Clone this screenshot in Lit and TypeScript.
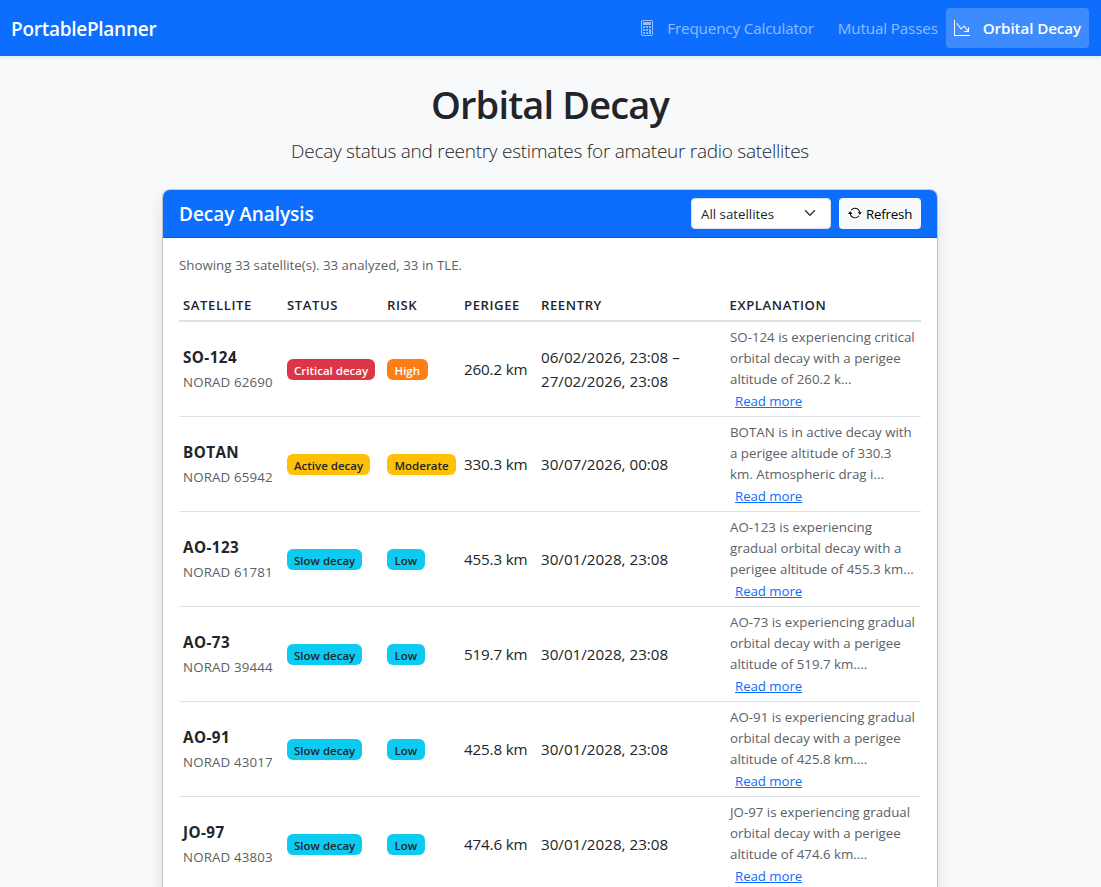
import { LitElement, html, css, svg } from "lit";
import { customElement } from "lit/decorators.js";

interface Sat {
  name: string;
  norad: string;
  status: string;
  statusKind: string;
  risk: string;
  riskKind: string;
  perigee: string;
  reentry: string[];
  text: string[];
}

const slow = (name: string, norad: string, perigee: string, text: string[]): Sat => ({
  name, norad, perigee, text,
  status: "Slow decay", statusKind: "info", risk: "Low", riskKind: "info",
  reentry: ["30/01/2028, 23:08"],
});

const SATS: Sat[] = [
  {
    name: "SO-124", norad: "62690", status: "Critical decay", statusKind: "danger",
    risk: "High", riskKind: "orange", perigee: "260.2 km",
    reentry: ["06/02/2026, 23:08 –", "27/02/2026, 23:08"],
    text: ["SO-124 is experiencing critical", "orbital decay with a perigee", "altitude of 260.2 k..."],
  },
  {
    name: "BOTAN", norad: "65942", status: "Active decay", statusKind: "warning",
    risk: "Moderate", riskKind: "warning", perigee: "330.3 km",
    reentry: ["30/07/2026, 00:08"],
    text: ["BOTAN is in active decay with", "a perigee altitude of 330.3", "km. Atmospheric drag i..."],
  },
  slow("AO-123", "61781", "455.3 km", ["AO-123 is experiencing", "gradual orbital decay with a", "perigee altitude of 455.3 km..."]),
  slow("AO-73", "39444", "519.7 km", ["AO-73 is experiencing gradual", "orbital decay with a perigee", "altitude of 519.7 km...."]),
  slow("AO-91", "43017", "425.8 km", ["AO-91 is experiencing gradual", "orbital decay with a perigee", "altitude of 425.8 km...."]),
  slow("JO-97", "43803", "474.6 km", ["JO-97 is experiencing gradual", "orbital decay with a perigee", "altitude of 474.6 km...."]),
];

const calculator = svg`
  <path d="M12 1a1 1 0 0 1 1 1v12a1 1 0 0 1-1 1H4a1 1 0 0 1-1-1V2a1 1 0 0 1 1-1zM4 0a2 2 0 0 0-2 2v12a2 2 0 0 0 2 2h8a2 2 0 0 0 2-2V2a2 2 0 0 0-2-2z"/>
  <path d="M4 2.5a.5.5 0 0 1 .5-.5h7a.5.5 0 0 1 .5.5v2a.5.5 0 0 1-.5.5h-7a.5.5 0 0 1-.5-.5zm0 4a.5.5 0 0 1 .5-.5h1a.5.5 0 0 1 .5.5v1a.5.5 0 0 1-.5.5h-1a.5.5 0 0 1-.5-.5zm0 3a.5.5 0 0 1 .5-.5h1a.5.5 0 0 1 .5.5v1a.5.5 0 0 1-.5.5h-1a.5.5 0 0 1-.5-.5zm0 3a.5.5 0 0 1 .5-.5h1a.5.5 0 0 1 .5.5v1a.5.5 0 0 1-.5.5h-1a.5.5 0 0 1-.5-.5zm3-6a.5.5 0 0 1 .5-.5h1a.5.5 0 0 1 .5.5v1a.5.5 0 0 1-.5.5h-1a.5.5 0 0 1-.5-.5zm0 3a.5.5 0 0 1 .5-.5h1a.5.5 0 0 1 .5.5v1a.5.5 0 0 1-.5.5h-1a.5.5 0 0 1-.5-.5zm0 3a.5.5 0 0 1 .5-.5h1a.5.5 0 0 1 .5.5v1a.5.5 0 0 1-.5.5h-1a.5.5 0 0 1-.5-.5zm3-6a.5.5 0 0 1 .5-.5h1a.5.5 0 0 1 .5.5v1a.5.5 0 0 1-.5.5h-1a.5.5 0 0 1-.5-.5zm0 3a.5.5 0 0 1 .5-.5h1a.5.5 0 0 1 .5.5v4a.5.5 0 0 1-.5.5h-1a.5.5 0 0 1-.5-.5z"/>`;
const graphDown = svg`
  <path fill-rule="evenodd" d="M0 0h1v15h15v1H0zm10 11.5a.5.5 0 0 0 .5.5h4a.5.5 0 0 0 .5-.5v-4a.5.5 0 0 0-1 0v2.6l-3.613-4.417a.5.5 0 0 0-.74-.037L7.06 8.233 3.404 3.206a.5.5 0 0 0-.808.588l4 5.5a.5.5 0 0 0 .758.06l2.609-2.61L13.445 11H10.5a.5.5 0 0 0-.5.5"/>`;
const repeat = svg`
  <path d="M11.534 7h3.932a.25.25 0 0 1 .192.41l-1.966 2.36a.25.25 0 0 1-.384 0l-1.966-2.36a.25.25 0 0 1 .192-.41m-11 2h3.932a.25.25 0 0 0 .192-.41L2.692 6.23a.25.25 0 0 0-.384 0L.342 8.59A.25.25 0 0 0 .534 9"/>
  <path fill-rule="evenodd" d="M8 3c-1.552 0-2.94.707-3.857 1.818a.5.5 0 1 1-.771-.636A6.002 6.002 0 0 1 13.917 7H12.9A5 5 0 0 0 8 3M3.1 9a5.002 5.002 0 0 0 8.757 2.182.5.5 0 1 1 .771.636A6.002 6.002 0 0 1 2.083 9z"/>`;

@customElement("app-root")
export class AppRoot extends LitElement {
  static styles = css`
    :host {
      display: block;
      height: 887px;
      overflow: hidden;
      background: #f8f9fa;
      color: #212529;
      font: 400 15.2px/24px "Open Sans", "Noto Sans", sans-serif;
    }
    * { box-sizing: border-box; }
    svg { display: block; fill: currentColor; flex: none; }
    .navbar {
      display: flex; align-items: center; justify-content: space-between;
      height: 56px; padding: 8px 12px 8px 11px;
      background: #0d6efd; color: #fff;
      box-shadow: 0 2px 4px rgba(0, 0, 0, .075);
    }
    .brand { padding-top: 2px; font-size: 19px; font-weight: 600; line-height: 30px; letter-spacing: -.27px; white-space: nowrap; }
    .links { display: flex; }
    .link {
      display: flex; align-items: center; height: 40px; padding: 0 8px; letter-spacing: -.14px;
      color: rgba(255, 255, 255, .55); border-radius: 4px; white-space: nowrap;
    }
    .link + .link { margin-left: 8px; }
    .link + .link.active { margin-left: 0; }
    .link svg { margin-right: 12px; }
    .active { color: #fff; background: rgba(255, 255, 255, .2); font-weight: 600; letter-spacing: -.1px; }
    .active svg { margin-right: 13px; }
    .head { width: 1100px; text-align: center; padding-top: 24px; height: 133px; }
    h1 { margin: 0; font-size: 38px; font-weight: 600; line-height: 48px; letter-spacing: -.85px; }
    .lead { margin: 8px 0 0; font-size: 19px; font-weight: 300; line-height: 30px; letter-spacing: -.27px; }
    .card {
      width: 776px; margin: 0 0 0 162px; height: 720px;
      background: #fff; border: 1px solid rgba(0, 0, 0, .176); border-radius: 8px;
      box-shadow: 0 8px 16px rgba(0, 0, 0, .1); background-clip: padding-box;
    }
    .card-head {
      display: flex; align-items: center; height: 48px; padding: 0 16px 1px; gap: 8px;
      background: #0d6efd; color: #fff; border-bottom: 1px solid rgba(0, 0, 0, .176);
      border-radius: 7px 7px 0 0;
    }
    h2 { margin: 0 auto 0 0; padding-top: 2px; font-size: 19px; font-weight: 600; line-height: 24px; letter-spacing: -.05px; }
    .select, .button {
      display: flex; align-items: center; height: 31px; border-radius: 4px;
      font-size: 13.3px; white-space: nowrap;
    }
    .select { width: 140px; padding: 1px 14px 0 9px; justify-content: space-between; background: #fff; color: #212529; border: 1px solid #dee2e6; }
    .select svg { margin-top: -2px; }
    .button { width: 82px; padding: 1px 0 0 9px; gap: 4px; background: #f8f9fa; color: #000; letter-spacing: -.2px; }
    .button svg { margin-top: -2px; }
    .body { padding: 17px 16px 0; }
    .summary { font-size: 13.3px; line-height: 21px; color: #5c6166; }
    table { width: 742px; margin-top: 14px; border-collapse: separate; border-spacing: 0; table-layout: fixed; }
    th, td { padding: 0 4px; text-align: left; vertical-align: middle; white-space: nowrap; }
    th {
      height: 32px; padding-top: 0; font-size: 13.1px; font-weight: 600; letter-spacing: .6px;
      border-bottom: 2px solid #dee2e6;
    }
    td { height: 95px; border-bottom: 1px solid #dee2e6; }
    .name { font-weight: 700; letter-spacing: .45px; }
    .norad { margin: 1px 0 -1px; font-size: 13.3px; letter-spacing: .15px; color: #5c6166; }
    .perigee { letter-spacing: -.15px; }
    .badge {
      display: block; width: fit-content; height: 21px; padding: 0 7px; border-radius: 6px;
      font-size: 11.5px; font-weight: 600; line-height: 23px;
    }
    .risk { padding: 0 7.5px; }
    .danger { background: #dc3545; color: #fff; }
    .orange { background: #fd7e14; color: #fff; }
    .warning { background: #ffc107; color: #212529; }
    .info { background: #0dcaf0; color: #212529; }
    .text { font-size: 13.3px; line-height: 21px; color: #5c6166; }
    .more { display: block; margin-left: 5px; font-size: 13.3px; line-height: 22px; letter-spacing: -.07px; color: #0d6efd; text-decoration: underline; }
    .text, .more { transform: translateX(.5px); }
  `;

  row(s: Sat) {
    return html`<tr>
      <td><div class="name">${s.name}</div><div class="norad">NORAD ${s.norad}</div></td>
      <td><span class="badge ${s.statusKind}">${s.status}</span></td>
      <td><span class="badge risk ${s.riskKind}">${s.risk}</span></td>
      <td class="perigee">${s.perigee}</td>
      <td>${s.reentry.map((l) => html`<div>${l}</div>`)}</td>
      <td><div class="text">${s.text.map((l) => html`<div>${l}</div>`)}</div><a class="more">Read more</a></td>
    </tr>`;
  }

  render() {
    return html`
      <nav class="navbar">
        <div class="brand">PortablePlanner</div>
        <div class="links">
          <a class="link"><svg width="16" height="16" viewBox="0 0 16 16">${calculator}</svg>Frequency Calculator</a>
          <a class="link">Mutual Passes</a>
          <a class="link active"><svg width="16" height="16" viewBox="0 0 16 16">${graphDown}</svg>Orbital Decay</a>
        </div>
      </nav>
      <header class="head">
        <h1>Orbital Decay</h1>
        <p class="lead">Decay status and reentry estimates for amateur radio satellites</p>
      </header>
      <section class="card">
        <div class="card-head">
          <h2>Decay Analysis</h2>
          <div class="select"><span>All satellites</span>
            <svg width="12" height="12" viewBox="0 0 16 16"><path fill="none" stroke="#343a40" stroke-linecap="round" stroke-linejoin="round" stroke-width="2" d="m2 5 6 6 6-6"/></svg>
          </div>
          <div class="button"><svg width="14" height="14" viewBox="0 0 16 16">${repeat}</svg><span>Refresh</span></div>
        </div>
        <div class="body">
          <div class="summary">Showing 33 satellite(s). 33 analyzed, 33 in TLE.</div>
          <table>
            <colgroup>
              <col style="width:104px"><col style="width:100px"><col style="width:77px">
              <col style="width:77px"><col style="width:188.5px"><col>
            </colgroup>
            <thead><tr>
              ${["SATELLITE", "STATUS", "RISK", "PERIGEE", "REENTRY", "EXPLANATION"].map((h) => html`<th>${h}</th>`)}
            </tr></thead>
            <tbody>${SATS.map((s) => this.row(s))}</tbody>
          </table>
        </div>
      </section>`;
  }
}
